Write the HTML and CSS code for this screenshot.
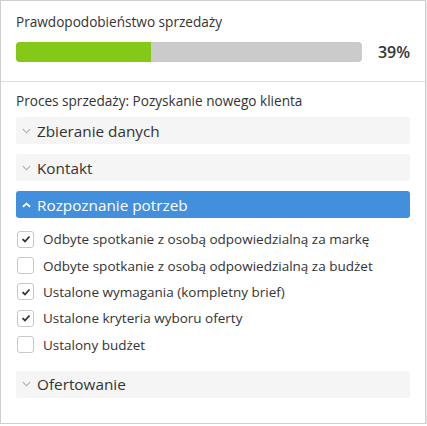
FILE: index.html
```html
<!DOCTYPE html>
<html lang="pl">
<head>
<meta charset="utf-8">
<link rel="stylesheet" href="styles.css">
</head>
<body>
<div class="card">
  <div class="top">
    <div class="label">Prawdopodobieństwo sprzedaży</div>
    <div class="progress-row">
      <div class="bar"><div class="fill" style="width:39%"></div></div>
      <div class="pct">39%</div>
    </div>
  </div>
  <div class="process">
    <div class="process-title">Proces sprzedaży: Pozyskanie nowego klienta</div>
    <div class="stage"><svg class="chev" viewBox="0 0 10 6" width="9" height="6"><path d="M1 1 L5 5 L9 1" fill="none" stroke="#aaa" stroke-width="1.2"/></svg><span>Zbieranie danych</span></div>
    <div class="stage"><svg class="chev" viewBox="0 0 10 6" width="9" height="6"><path d="M1 1 L5 5 L9 1" fill="none" stroke="#aaa" stroke-width="1.2"/></svg><span>Kontakt</span></div>
    <div class="stage active"><svg class="chev" viewBox="0 0 10 6" width="9" height="6"><path d="M1 5 L5 1.5 L9 5" fill="none" stroke="#fff" stroke-width="2"/></svg><span>Rozpoznanie potrzeb</span></div>
    <ul class="checks">
      <li><span class="box checked"><svg viewBox="0 0 10 10" width="10" height="10"><path d="M1.5 5.2 L4 7.5 L8.5 2.5" fill="none" stroke="#333" stroke-width="1.8"/></svg></span>Odbyte spotkanie z osobą odpowiedzialną za markę</li>
      <li><span class="box"></span>Odbyte spotkanie z osobą odpowiedzialną za budżet</li>
      <li><span class="box checked"><svg viewBox="0 0 10 10" width="10" height="10"><path d="M1.5 5.2 L4 7.5 L8.5 2.5" fill="none" stroke="#333" stroke-width="1.8"/></svg></span>Ustalone wymagania (kompletny brief)</li>
      <li><span class="box checked"><svg viewBox="0 0 10 10" width="10" height="10"><path d="M1.5 5.2 L4 7.5 L8.5 2.5" fill="none" stroke="#333" stroke-width="1.8"/></svg></span>Ustalone kryteria wyboru oferty</li>
      <li><span class="box"></span>Ustalony budżet</li>
    </ul>
    <div class="stage"><svg class="chev" viewBox="0 0 10 6" width="9" height="6"><path d="M1 1 L5 5 L9 1" fill="none" stroke="#aaa" stroke-width="1.2"/></svg><span>Ofertowanie</span></div>
  </div>
</div>
</body>
</html>
```
FILE: styles.css
```css
* { box-sizing: border-box; }
body {
  margin: 0;
  font-family: "Open Sans", "Liberation Sans", sans-serif;
  color: #333;
  background: #fff;
}
.card {
  width: 426px;
  height: 424px;
  border: 1px solid #cfcfcf;
  box-shadow: 1px 1px 2px rgba(0,0,0,0.15);
}
.top {
  height: 81px;
  padding: 12px 15px 0 15px;
  border-bottom: 1px solid #ddd;
}
.label {
  font-size: 13.6px;
  line-height: 18px;
}
.progress-row {
  display: flex;
  align-items: center;
  margin-top: 10px;
}
.bar {
  width: 347px;
  height: 20px;
  background: #cbcbcb;
  border-radius: 4px;
  overflow: hidden;
}
.fill {
  height: 100%;
  background: #84c917;
}
.pct {
  margin-left: 16px;
  font-size: 16px;
  font-weight: 600;
}
.process {
  padding: 10px 15px 0 15px;
}
.process-title {
  font-size: 13.6px;
  line-height: 18px;
  margin-bottom: 7px;
}
.stage {
  height: 27px;
  background: #f5f5f5;
  border-radius: 3px;
  display: flex;
  align-items: center;
  padding-left: 6px;
  font-size: 15.3px;
  margin-bottom: 10px;
}
.stage .chev { margin-right: 6px; }
.stage.active {
  background: #428fde;
  color: #fff;
  margin-bottom: 8px;
}
.checks {
  list-style: none;
  margin: 0 0 13px 0;
  padding: 0;
}
.checks li {
  display: flex;
  align-items: center;
  height: 26.4px;
  font-size: 13.5px;
}
.box {
  width: 17px;
  height: 17px;
  border: 1px solid #c8c8c8;
  border-radius: 3px;
  margin: 0 9px 0 1px;
  display: flex;
  align-items: center;
  justify-content: center;
  background: #fff;
}
```
